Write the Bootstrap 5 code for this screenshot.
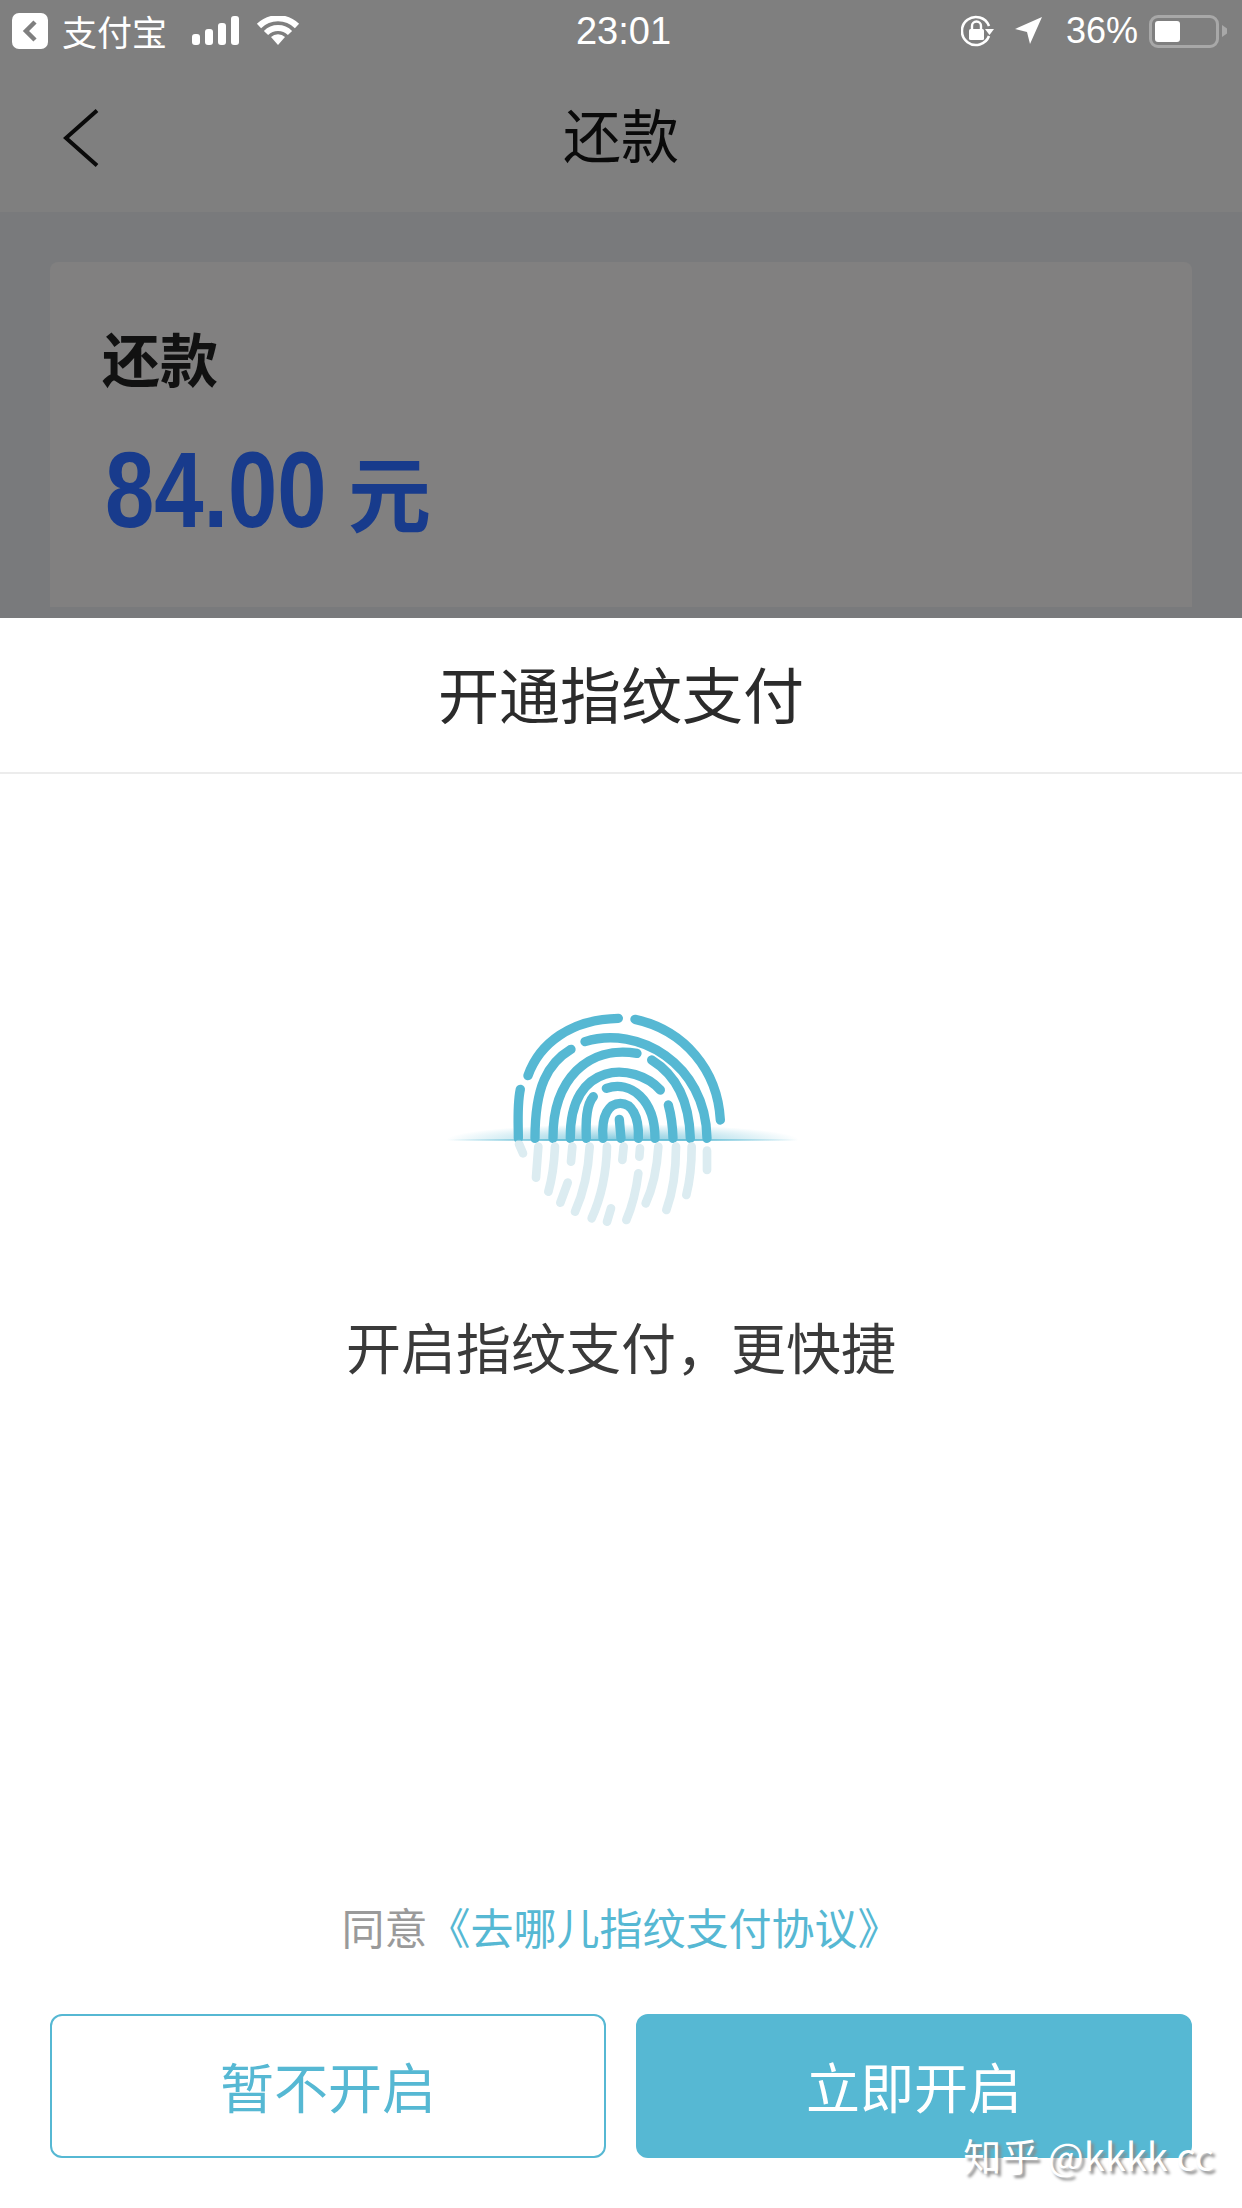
<!DOCTYPE html>
<html lang="zh-CN">
<head>
    <meta charset="UTF-8">
    <meta name="viewport" content="width=device-width, initial-scale=1.0">
    <title>开通指纹支付</title>
    <link href="https://cdn.jsdelivr.net/npm/bootstrap@5.3.0/dist/css/bootstrap.min.css" rel="stylesheet">
    <style>
        body {
            margin: 0;
            background: #fff;
            font-family: "Noto Sans CJK SC", "Liberation Sans", sans-serif;
        }
        .phone {
            position: relative;
            width: 1242px;
            height: 2208px;
            overflow: hidden;
        }
        .dim-area {
            height: 618px;
            overflow: hidden;
            background: #797a7c;
        }
        .dim-top {
            height: 212px;
            background: #7f7f7f;
        }
        .status-bar {
            display: grid;
            grid-template-columns: 1fr auto 1fr;
            align-items: center;
            height: 62px;
            padding: 0 15px 0 12px;
            color: #fff;
        }
        .app-back {
            width: 36px;
            height: 36px;
            background: #fff;
            border-radius: 7px;
        }
        .app-name {
            font-size: 35px;
            line-height: 36px;
            margin-left: 14px;
            margin-right: 25px;
        }
        .clock, .percent {
            font-family: "Liberation Sans", sans-serif;
            font-size: 38px;
            line-height: 36px;
        }
        .clock {
            margin-left: 8px;
        }
        .percent {
            font-size: 36px;
            margin: 0 11px 0 23px;
        }
        .arrow-gap {
            margin-left: 20px;
        }
        .batt {
            width: 70px;
            height: 33px;
            padding: 3px;
            border: 3px solid #a8a8a8;
            border-radius: 9px;
        }
        .batt-fill {
            width: 25px;
            height: 100%;
            background: #fff;
            border-radius: 3px;
        }
        .batt-nub {
            width: 5px;
            height: 12px;
            margin-left: 3px;
            background: #a8a8a8;
            clip-path: polygon(0 0, 100% 30%, 100% 70%, 0 100%);
        }
        .top-nav {
            height: 150px;
            position: relative;
        }
        .nav-back {
            position: absolute;
            left: 63px;
            top: 47px;
        }
        .nav-title {
            padding-top: 35px;
            font-size: 58px;
            line-height: 72px;
            color: #0a0a0a;
        }
        .bill-wrap {
            padding: 50px 50px 0;
        }
        .bill-card {
            height: 345px;
            padding: 55px 0 0 52px;
            background: #818080;
            border: 0;
            border-radius: 8px 8px 0 0;
        }
        .bill-label {
            font-size: 58px;
            line-height: 80px;
            font-weight: 700;
            color: #111;
        }
        .bill-amount {
            margin-top: 41px;
            height: 104px;
            color: #183b8c;
        }
        .bill-num {
            display: inline-block;
            width: 243px;
            margin-left: 3px;
            white-space: nowrap;
            font-family: "Liberation Sans", sans-serif;
            font-weight: 700;
            font-size: 108px;
            line-height: 104px;
            transform: scaleX(.82);
            transform-origin: 0 50%;
        }
        .bill-unit {
            font-size: 83px;
            font-weight: 700;
            line-height: 104px;
        }
        .sheet-title {
            height: 156px;
            font-size: 61px;
            line-height: 150px;
            color: #2b2b2b;
            border-bottom: 2px solid #ececec;
        }
        .print-box {
            padding-top: 216px;
        }
        .print-text {
            margin-top: 65px;
            font-size: 55px;
            line-height: 80px;
            color: #3a3a3a;
        }
        .agree {
            margin-top: 511px;
            font-size: 43px;
            line-height: 60px;
            color: #9a9a9a;
        }
        .agree a {
            color: #56b8d3;
            text-decoration: none;
        }
        .action-row {
            margin-top: 58px;
            padding: 0 50px;
            gap: 30px;
        }
        .action-btn {
            flex: 1 1 0;
            height: 144px;
            font-size: 54px;
            line-height: 1;
            border: 2px solid #56b8d3;
            border-radius: 12px;
        }
        .btn-later {
            background: #fff;
            color: #56b8d3;
        }
        .btn-now {
            background: #56b8d3;
            color: #fff;
        }
        .watermark {
            position: absolute;
            right: 28px;
            top: 2130px;
            font-size: 38px;
            line-height: 50px;
            color: #fff;
            text-shadow: 3px 3px 3px #8a8a8a;
            white-space: nowrap;
        }
    </style>
</head>
<body>
    <div class="phone">
        <div class="dim-area">
            <div class="dim-top">
                <div class="status-bar">
                    <div class="d-flex align-items-center">
                        <div class="app-back d-flex align-items-center justify-content-center">
                            <svg width="16" height="24" viewBox="0 0 16 24"><path d="M13 3 L4 12 L13 21" fill="none" stroke="#7f7f7f" stroke-width="4.5"/></svg>
                        </div>
                        <span class="app-name">支付宝</span>
                        <svg width="48" height="30" viewBox="0 0 48 30"><g fill="#fff"><rect x="0" y="18" width="8" height="11" rx="3"/><rect x="13" y="13" width="8" height="16" rx="3"/><rect x="26" y="7" width="8" height="22" rx="3"/><rect x="39" y="0" width="8" height="29" rx="3"/></g></svg>
                        <svg class="ms-3" width="44" height="30" viewBox="0 0 44 30"><g fill="none" stroke="#fff" stroke-width="6"><path d="M3 10 A27 27 0 0 1 41 10"/><path d="M10 17 A17 17 0 0 1 34 17"/></g><path d="M15 21 A10 10 0 0 1 29 21 L22 29 Z" fill="#fff"/></svg>
                    </div>
                    <div class="clock">23:01</div>
                    <div class="d-flex align-items-center justify-content-end">
                        <svg width="34" height="32" viewBox="0 0 34 32"><path d="M28 21 A14 14 0 1 1 28 11" fill="none" stroke="#fff" stroke-width="2.6"/><path d="M24 14 L33 14 L28.500 20 Z" fill="#fff"/><rect x="8" y="14" width="15" height="11" rx="1.500" fill="#fff"/><path d="M11 14 V11 A4.500 4.500 0 0 1 20 11 V14" fill="none" stroke="#fff" stroke-width="2.400"/></svg>
                        <svg class="arrow-gap" width="28" height="30" viewBox="0 0 28 30"><path d="M0 13 L27 1 L15 28 L12 16 Z" fill="#fff"/></svg>
                        <span class="percent">36%</span>
                        <div class="batt"><div class="batt-fill"></div></div>
                        <div class="batt-nub"></div>
                    </div>
                </div>
                <div class="top-nav text-center">
                    <svg class="nav-back" width="37" height="58" viewBox="0 0 37 58"><path d="M34 1.500 L3 29 L34 56.500" fill="none" stroke="#0a0a0a" stroke-width="4"/></svg>
                    <div class="nav-title">还款</div>
                </div>
            </div>
            <div class="bill-wrap">
                <div class="card bill-card">
                    <div class="bill-label">还款</div>
                    <div class="bill-amount d-flex align-items-center">
                        <span class="bill-num">84.00</span>
                        <span class="bill-unit">元</span>
                    </div>
                </div>
            </div>
        </div>

        <div class="sheet-title text-center">开通指纹支付</div>

        <div class="print-box text-center">
            <svg class="d-block mx-auto" width="380" height="250" viewBox="0 0 1140 750">
                <defs>
                    <radialGradient id="glow" cx="50%" cy="50%" r="50%">
                        <stop offset="0" stop-color="#56b8d3" stop-opacity=".75"/>
                        <stop offset="1" stop-color="#56b8d3" stop-opacity="0"/>
                    </radialGradient>
                    <linearGradient id="beam" x1="0" x2="1" y1="0" y2="0">
                        <stop offset="0" stop-color="#56b8d3" stop-opacity="0"/>
                        <stop offset=".3" stop-color="#56b8d3" stop-opacity=".8"/>
                        <stop offset=".7" stop-color="#56b8d3" stop-opacity=".8"/>
                        <stop offset="1" stop-color="#56b8d3" stop-opacity="0"/>
                    </linearGradient>
                    <clipPath id="aboveLine"><rect x="0" y="380" width="1140" height="71"/></clipPath>
                </defs>
                <g fill="none" stroke="#56b8d3" stroke-width="28" stroke-linecap="round">
                    <path d="M562 85 C420 88 325 160 291 257"/>
                    <path d="M268 298 C258 345 262 400 262 445"/>
                    <path d="M612 88 C760 120 860 240 868 390"/>
                    <path d="M462 155 C620 105 825 220 828 445"/>
                    <path d="M420 178 C350 220 312 290 312 445"/>
                    <path d="M618 190 C470 165 365 270 366 445"/>
                    <path d="M662 210 C735 255 775 330 778 445"/>
                    <path d="M688 300 C610 215 415 210 418 445"/>
                    <path d="M712 345 C722 380 725 410 726 445"/>
                    <path d="M526 295 C600 270 672 330 672 445"/>
                    <path d="M487 320 C465 345 464 395 466 445"/>
                    <path d="M516 445 C510 375 535 340 568 340 C600 340 625 375 622 445"/>
                    <path d="M565 388 L570 445"/>
                </g>
                <g fill="none" stroke="#dcecf1" stroke-width="26" stroke-linecap="round">
                    <path d="M264 462 L276 490"/>
                    <path d="M322 470 L315 563"/>
                    <path d="M372 470 Q368 550 352 605"/>
                    <path d="M424 470 L420 515"/>
                    <path d="M410 578 L388 638"/>
                    <path d="M476 470 Q470 580 432 665"/>
                    <path d="M528 470 Q525 590 482 685"/>
                    <path d="M578 470 L574 510"/>
                    <path d="M627 475 L625 500"/>
                    <path d="M622 550 Q612 630 586 690"/>
                    <path d="M540 655 L528 695"/>
                    <path d="M682 470 Q676 570 644 640"/>
                    <path d="M735 470 Q735 580 706 660"/>
                    <path d="M782 470 Q782 550 766 615"/>
                    <path d="M828 482 L828 540"/>
                </g>
                <ellipse cx="575" cy="450" rx="530" ry="48" fill="url(#glow)" clip-path="url(#aboveLine)"/>
                <rect x="50" y="447" width="1050" height="6" fill="url(#beam)"/>
            </svg>
            <div class="print-text">开启指纹支付，更快捷</div>
        </div>

        <div class="agree text-center">同意<a href="#">《去哪儿指纹支付协议》</a></div>

        <div class="action-row d-flex">
            <button type="button" class="btn action-btn btn-later">暂不开启</button>
            <button type="button" class="btn action-btn btn-now">立即开启</button>
        </div>

        <div class="watermark">知乎 @kkkk cc</div>
    </div>
    <script src="https://cdn.jsdelivr.net/npm/bootstrap@5.3.0/dist/js/bootstrap.bundle.min.js"></script>
</body>
</html>
